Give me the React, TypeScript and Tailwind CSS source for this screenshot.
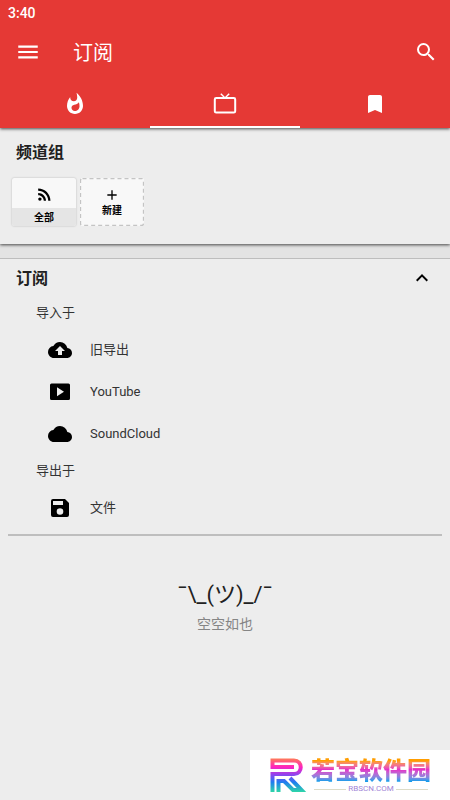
import { useState } from 'react';
import type { ReactNode } from 'react';
import {
  MdAdd,
  MdBookmark,
  MdCloud,
  MdCloudUpload,
  MdExpandLess,
  MdMenu,
  MdRssFeed,
  MdSearch,
  MdWhatshot,
} from 'react-icons/md';

function TvIcon() {
  return (
    <svg width="24" height="24" viewBox="0 0 24 24" fill="none" stroke="currentColor">
      <rect x="1.8" y="6" width="20.4" height="14.6" rx="1.4" strokeWidth="2" />
      <path d="M7.8 1.8 12 6l4.2-4.2" strokeWidth="1.4" />
    </svg>
  );
}

function VideoIcon() {
  return (
    <svg width="24" height="24" viewBox="0 0 24 24" fill="currentColor">
      <path
        fillRule="evenodd"
        d="M3.5 3.5h17A1.5 1.5 0 0 1 22 5v13.5a1.5 1.5 0 0 1-1.5 1.5h-17A1.5 1.5 0 0 1 2 18.5V5a1.5 1.5 0 0 1 1.5-1.5ZM9 7.3v9l7-4.5-7-4.5Z"
      />
    </svg>
  );
}

function FileIcon() {
  return (
    <svg width="24" height="24" viewBox="0 0 24 24" fill="currentColor">
      <path
        fillRule="evenodd"
        d="M5 3h12l4 4v12a2 2 0 0 1-2 2H5a2 2 0 0 1-2-2V5a2 2 0 0 1 2-2Zm0 2v4h10V5H5Zm7 7.2a3.3 3.3 0 1 0 0 6.6 3.3 3.3 0 0 0 0-6.6Z"
      />
    </svg>
  );
}

const tabs = [
  { id: 'trending', label: '热门', icon: <MdWhatshot size={24} /> },
  { id: 'subs', label: '订阅', icon: <TvIcon /> },
  { id: 'bookmarks', label: '书签', icon: <MdBookmark size={24} /> },
];

const importSources = [
  { label: '旧导出', icon: <MdCloudUpload size={24} /> },
  { label: 'YouTube', icon: <VideoIcon /> },
  { label: 'SoundCloud', icon: <MdCloud size={24} /> },
];

const exportTargets = [{ label: '文件', icon: <FileIcon /> }];

function SourceRow({ label, icon }: { label: string; icon: ReactNode }) {
  return (
    <button className="flex h-[42px] w-full items-center gap-[18px] pl-12 text-left">
      <span className="text-black">{icon}</span>
      <span>{label}</span>
    </button>
  );
}

function Header() {
  const [active, setActive] = useState('subs');

  return (
    <header className="relative z-10 bg-[#e53935] text-white shadow-[0_1px_3px_rgba(0,0,0,0.7)]">
      <div className="flex h-[26px] items-center px-2 text-sm font-medium">3:40</div>
      <div className="flex h-[52px] items-center pr-3 pl-[15px]">
        <button aria-label="菜单">
          <MdMenu size={26} />
        </button>
        <h1 className="ml-8 flex-1 pt-[2px] text-xl leading-6">订阅</h1>
        <button aria-label="搜索">
          <MdSearch size={24} />
        </button>
      </div>
      <nav className="grid h-[50px] grid-cols-3">
        {tabs.map((tab) => (
          <button
            key={tab.id}
            aria-label={tab.label}
            onClick={() => setActive(tab.id)}
            className={`flex items-center justify-center border-b-2 pt-1 ${
              active === tab.id ? 'border-white' : 'border-transparent'
            }`}
          >
            {tab.icon}
          </button>
        ))}
      </nav>
    </header>
  );
}

function ChannelGroups() {
  return (
    <section className="relative bg-[#ededed] pb-[18px] shadow-[0_1px_3px_rgba(0,0,0,0.7)]">
      <h2 className="px-4 pt-[13px] text-base leading-6 font-bold">频道组</h2>
      <div className="mt-[13px] flex gap-1 px-3 text-[10px] font-bold text-black">
        <button className="flex h-12 w-16 flex-col overflow-hidden rounded-xs bg-[#f8f8f8] shadow-[0_0_2px_rgba(0,0,0,0.25)]">
          <span className="flex h-[30px] w-full items-center justify-center pt-[2px]">
            <MdRssFeed size={19} />
          </span>
          <span className="flex h-[18px] w-full items-center justify-center bg-[#e5e5e5]">全部</span>
        </button>
        <button className="relative h-12 w-16 rounded-xs bg-[#f8f8f8]">
          <svg className="absolute inset-0 size-full" fill="none" stroke="#c4c4c4">
            <rect x="0.5" y="0.5" width="63" height="47" rx="2" strokeWidth="1.3" strokeDasharray="4 3" />
          </svg>
          <span className="flex flex-col items-center pt-[2px]">
            <MdAdd size={16} />
            <span className="leading-4">新建</span>
          </span>
        </button>
      </div>
    </section>
  );
}

function Subscriptions() {
  const [open, setOpen] = useState(true);

  return (
    <section className="border-t border-[#bdbdbd] bg-[#ededed]">
      <button
        onClick={() => setOpen(!open)}
        aria-expanded={open}
        className="flex h-[38px] w-full items-center justify-between px-4"
      >
        <span className="pt-[2px] text-base font-bold">订阅</span>
        <MdExpandLess size={24} className={open ? 'text-black' : 'rotate-180 text-black'} />
      </button>
      {open && (
        <div className="text-[13px] text-[#333333]">
          <h3 className="flex h-8 items-center pl-9">导入于</h3>
          {importSources.map((item) => (
            <SourceRow key={item.label} {...item} />
          ))}
          <h3 className="flex h-8 items-center pl-9">导出于</h3>
          {exportTargets.map((item) => (
            <SourceRow key={item.label} {...item} />
          ))}
        </div>
      )}
      <hr className="mx-2 mt-[5px] border-t-2 border-[#bebebe]" />
    </section>
  );
}

function SiteBadge() {
  return (
    <aside className="fixed right-0 bottom-0 flex h-[50px] w-[200px] items-center gap-1 bg-white pl-5">
      <svg width="37" height="36" viewBox="0 0 37 36" fill="none">
        <defs>
          <linearGradient id="mark" gradientUnits="userSpaceOnUse" x1="0" y1="0" x2="0" y2="36">
            <stop offset="0" stopColor="#ff8a45" />
            <stop offset="0.28" stopColor="#ff22c0" />
            <stop offset="0.5" stopColor="#8a45f0" />
            <stop offset="0.7" stopColor="#1f7df0" />
            <stop offset="1" stopColor="#2fe0a0" />
          </linearGradient>
        </defs>
        <path d="M24 10H2.5V3.5H24c9 0 9 13.5 0 13.5H2.5v18" stroke="url(#mark)" strokeWidth="4" />
        <path d="M8.5 35V24H14l9 9h8.5L20 21" stroke="url(#mark)" strokeWidth="4" />
      </svg>
      <div className="flex flex-col items-center">
        <span className="bg-linear-to-b from-[#ff9d00] from-15% via-[#e52cc8] via-45% to-[#159bea] to-85% bg-clip-text text-2xl leading-7 font-black text-transparent">
          若宝软件园
        </span>
        <span className="flex items-center gap-[2px] text-[8px] leading-2 text-[#a284d6]">
          <span className="h-px w-8 bg-[#dcdcc8]" />
          RBSCN.COM
          <span className="h-px w-8 bg-[#dcdcc8]" />
        </span>
      </div>
    </aside>
  );
}

export default function App() {
  return (
    <div className="min-h-screen bg-[#ededed] font-['Roboto','Noto_Sans_CJK_SC',sans-serif] text-[#212121]">
      <Header />
      <main>
        <div className="bg-[#e3e3e3] pb-[14px]">
          <ChannelGroups />
        </div>
        <Subscriptions />
        <div className="flex flex-col items-center pt-[43px]">
          <p className="text-[22px] leading-8">¯\_(ツ)_/¯</p>
          <p className="mt-[3px] text-sm leading-5 text-[#858585]">空空如也</p>
        </div>
      </main>
      <SiteBadge />
    </div>
  );
}
